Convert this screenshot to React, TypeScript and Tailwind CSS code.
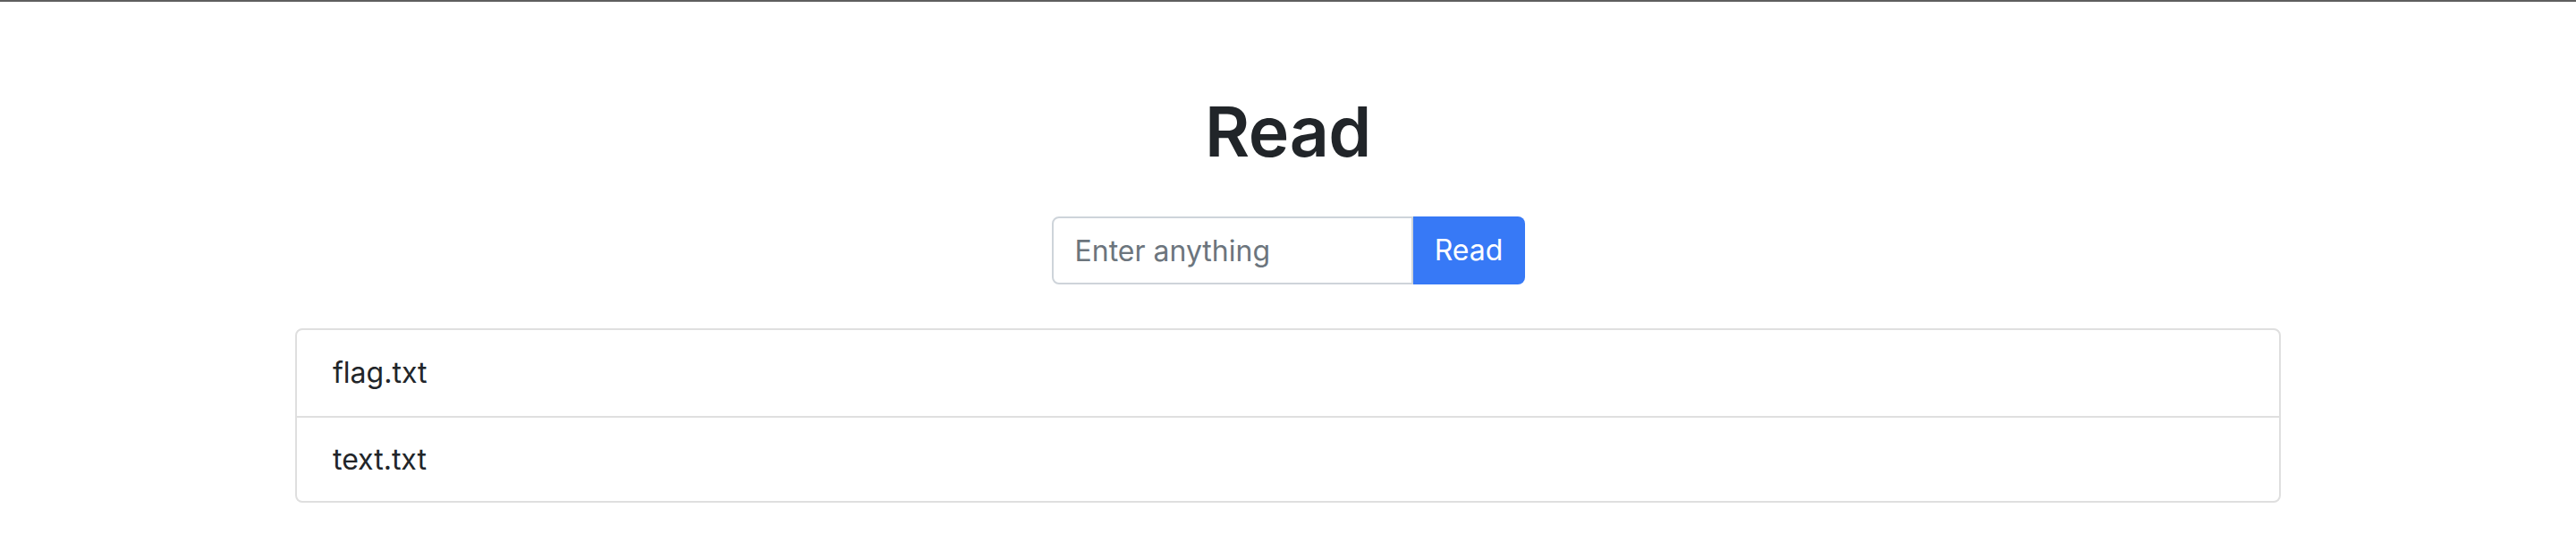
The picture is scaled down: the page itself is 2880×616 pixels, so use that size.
const files = ["flag.txt", "text.txt"];

export default function App() {
  return (
    <div className="min-h-screen bg-white border-t-2 border-[#5f5f5f] font-['Inter',sans-serif] text-[#212529]">
      <div className="mx-auto w-[2280px] px-[30px] flex flex-col items-center">
        <h1 className="mt-[97px] text-[77px] leading-[96px] font-semibold tracking-[-0.5px]">Read</h1>

        <div className="mt-[47px] flex h-[76px]">
          <input
            placeholder="Enter anything"
            className="w-[404px] h-full border-2 border-[#ced4da] rounded-l-[8px] px-[24px] text-[32px] text-[#495057] placeholder:text-[#6c757d] outline-none"
          />
          <button className="h-full w-[125px] bg-[#3779f6] text-white text-[32px] rounded-r-[8px]">
            Read
          </button>
        </div>

        <ul className="mt-[49px] w-full border-2 border-[#dfdfdf] rounded-[8px]">
          {files.map((f, i) => (
            <li
              key={f}
              className={
                "px-[40px] text-[32px] leading-[48px]" +
                (i < files.length - 1 ? " py-[24px] border-b-2 border-[#dfdfdf]" : " pt-[23px] pb-[22px]")
              }
            >
              {f}
            </li>
          ))}
        </ul>
      </div>
    </div>
  );
}
